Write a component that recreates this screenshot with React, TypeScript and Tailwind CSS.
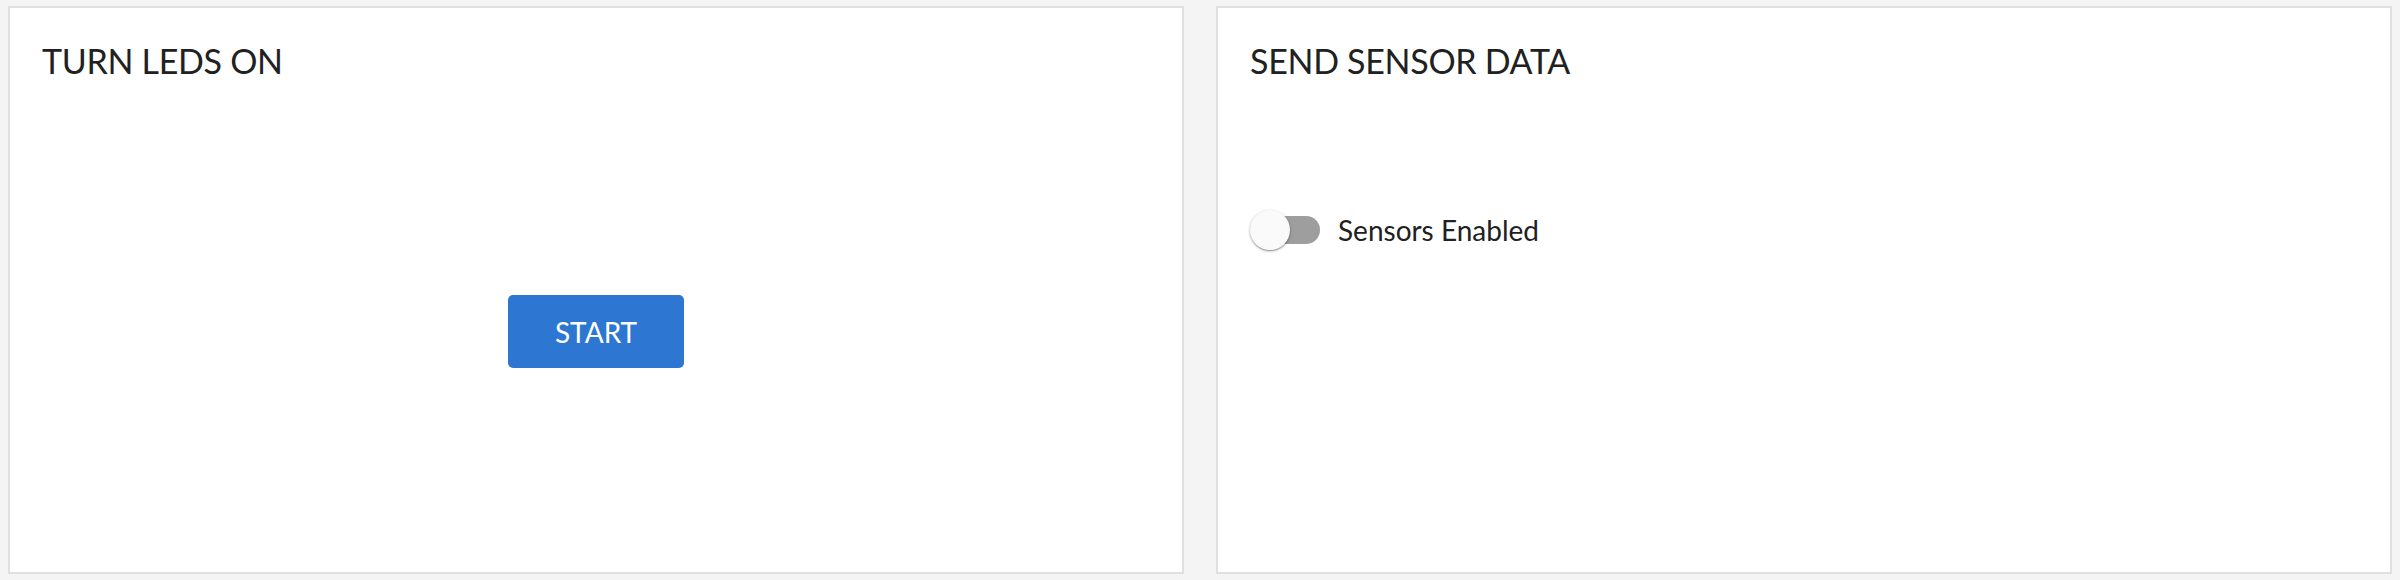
import { useState } from "react";

function Switch({ checked, onChange }: { checked: boolean; onChange: (v: boolean) => void }) {
  return (
    <button
      type="button"
      role="switch"
      aria-checked={checked}
      onClick={() => onChange(!checked)}
      className="relative h-[40px] w-[70px] shrink-0"
    >
      <span
        className={
          "absolute left-[2px] top-[6px] h-[28px] w-[68px] rounded-full " +
          (checked ? "bg-[#90b9ea]" : "bg-[#9e9e9e]")
        }
      />
      <span
        className={
          "absolute top-0 h-[40px] w-[40px] rounded-full shadow-[0_1px_3px_rgba(0,0,0,0.3),0_1px_1px_rgba(0,0,0,0.14),0_2px_1px_-1px_rgba(0,0,0,0.12)] " +
          (checked ? "left-[30px] bg-[#2d77d3]" : "left-0 bg-[#fafafa]")
        }
      />
    </button>
  );
}

export default function App() {
  const [sensors, setSensors] = useState(false);

  return (
    <div className="flex h-[580px] gap-8 bg-[#f4f4f4] px-2 py-1.5 font-['Lato',sans-serif] text-[#212121]">
      <section className="flex flex-1 flex-col border-2 border-[#e0e0e0] bg-white">
        <h2 className="px-8 pt-8 text-[34px] leading-[42px] tracking-[-0.3px]">TURN LEDS ON</h2>
        <div className="flex flex-1 items-center justify-center pt-[9px]">
          <button className="h-[73px] w-[176px] rounded-[5px] bg-[#2d77d3] text-[28px] text-white">
            START
          </button>
        </div>
      </section>

      <section className="flex flex-1 flex-col border-2 border-[#e0e0e0] bg-white">
        <h2 className="px-8 pt-8 text-[34px] leading-[42px] tracking-[-0.3px]">SEND SENSOR DATA</h2>
        <label className="mt-[128px] flex items-center gap-[18px] px-8">
          <Switch checked={sensors} onChange={setSensors} />
          <span className="text-[28px] leading-[40px]">Sensors Enabled</span>
        </label>
      </section>
    </div>
  );
}
